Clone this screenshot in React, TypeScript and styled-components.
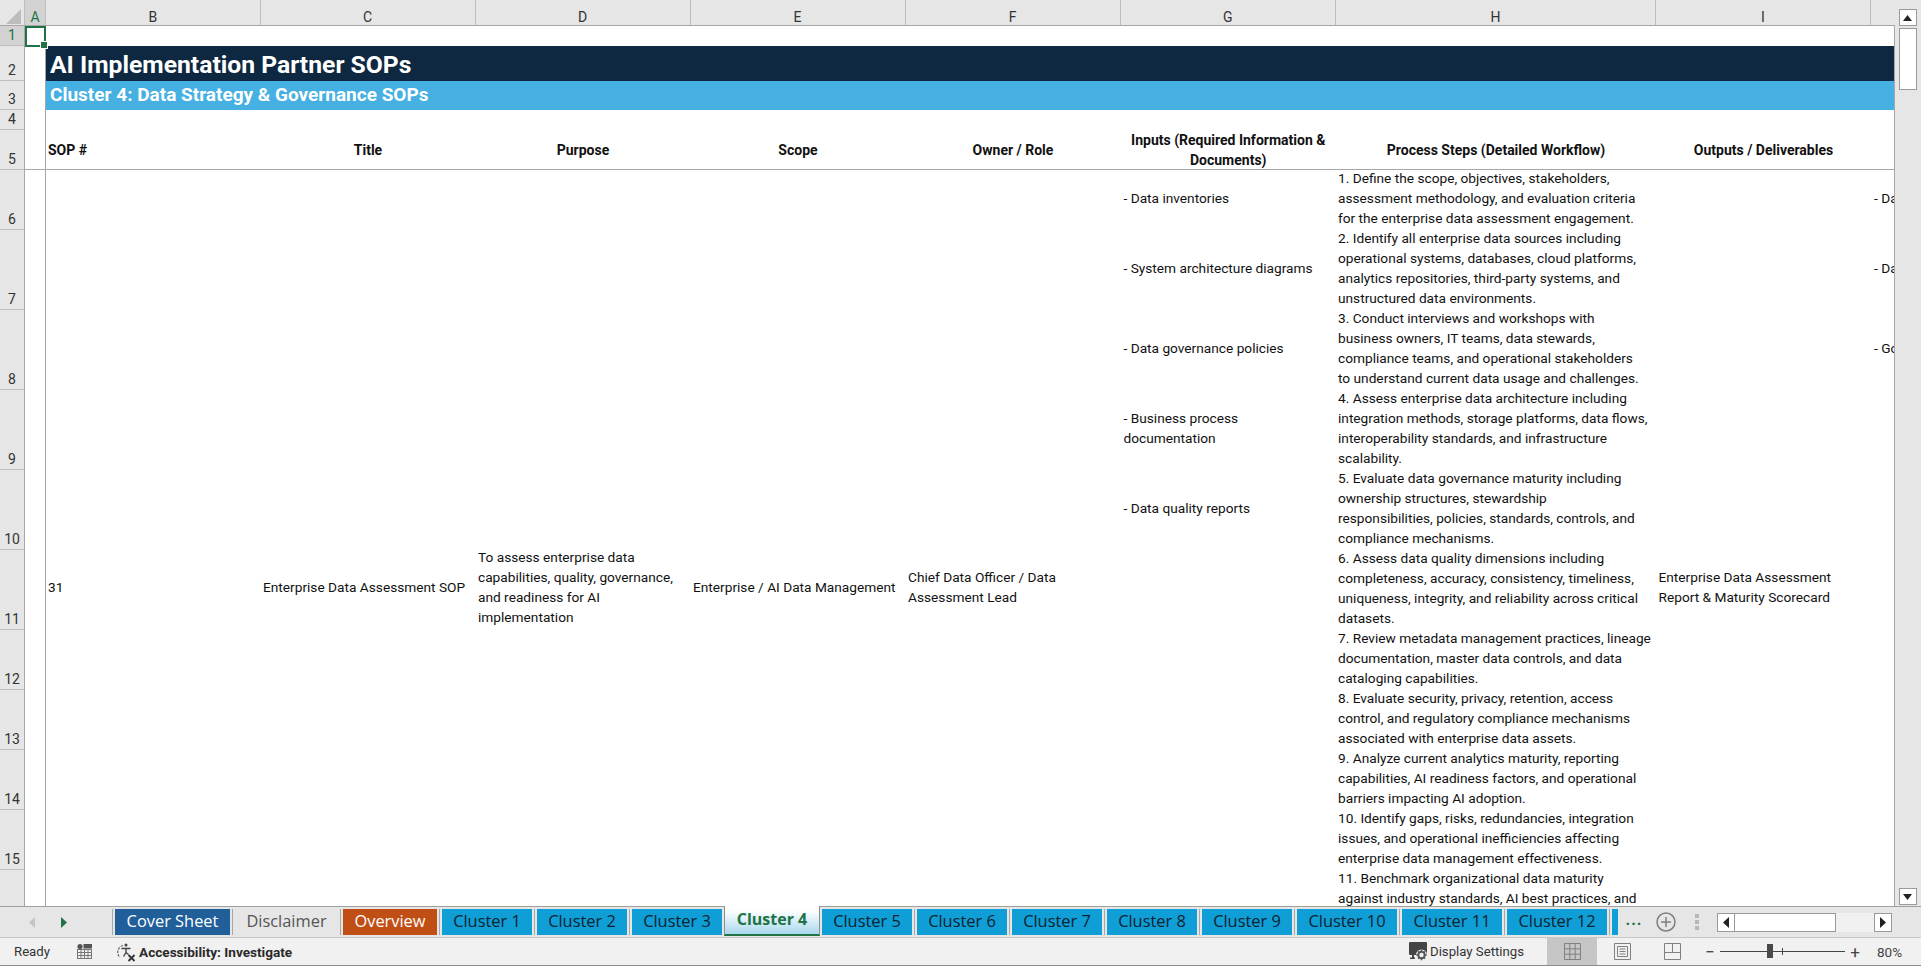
import React from 'react';
import styled, { createGlobalStyle } from 'styled-components';

const GREEN = '#217346';
const LINE = '#a6a6a6';
const FONT = `Roboto, 'Liberation Sans', sans-serif`;

const COLS = [
  { name: 'A', w: 21 },
  { name: 'B', w: 214.5 },
  { name: 'C', w: 215 },
  { name: 'D', w: 215 },
  { name: 'E', w: 215 },
  { name: 'F', w: 215 },
  { name: 'G', w: 215.5 },
  { name: 'H', w: 320 },
  { name: 'I', w: 215 },
  { name: '', w: 24 },
];

const ROWS = [20, 35, 29, 19.5, 40, 60, 80, 80, 80, 80, 80, 60, 60, 60, 60, 60, 80];
const VISIBLE_ROWS = 15;

const INPUTS = [
  ['- Data inventories'],
  ['- System architecture diagrams'],
  ['- Data governance policies'],
  ['- Business process', 'documentation'],
  ['- Data quality reports'],
];

const OUTPUT_STUBS = ['- Da', '- Da', '- Go'];

const STEPS = [
  ['1. Define the scope, objectives, stakeholders,', 'assessment methodology, and evaluation criteria', 'for the enterprise data assessment engagement.'],
  ['2. Identify all enterprise data sources including', 'operational systems, databases, cloud platforms,', 'analytics repositories, third-party systems, and', 'unstructured data environments.'],
  ['3. Conduct interviews and workshops with', 'business owners, IT teams, data stewards,', 'compliance teams, and operational stakeholders', 'to understand current data usage and challenges.'],
  ['4. Assess enterprise data architecture including', 'integration methods, storage platforms, data flows,', 'interoperability standards, and infrastructure', 'scalability.'],
  ['5. Evaluate data governance maturity including', 'ownership structures, stewardship', 'responsibilities, policies, standards, controls, and', 'compliance mechanisms.'],
  ['6. Assess data quality dimensions including', 'completeness, accuracy, consistency, timeliness,', 'uniqueness, integrity, and reliability across critical', 'datasets.'],
  ['7. Review metadata management practices, lineage', 'documentation, master data controls, and data', 'cataloging capabilities.'],
  ['8. Evaluate security, privacy, retention, access', 'control, and regulatory compliance mechanisms', 'associated with enterprise data assets.'],
  ['9. Analyze current analytics maturity, reporting', 'capabilities, AI readiness factors, and operational', 'barriers impacting AI adoption.'],
  ['10. Identify gaps, risks, redundancies, integration', 'issues, and operational inefficiencies affecting', 'enterprise data management effectiveness.'],
  ['11. Benchmark organizational data maturity', 'against industry standards, AI best practices, and'],
];

const TABS = [
  { label: 'Cover Sheet', bg: '#215f9a', fg: '#fff', w: 115 },
  { label: 'Disclaimer', bg: 'transparent', fg: '#555', w: 103 },
  { label: 'Overview', bg: '#c04f15', fg: '#fff', w: 94 },
  { label: 'Cluster 1', bg: '#0f9ed5', fg: '#0c2430', w: 90 },
  { label: 'Cluster 2', bg: '#0f9ed5', fg: '#0c2430', w: 90 },
  { label: 'Cluster 3', bg: '#0f9ed5', fg: '#0c2430', w: 90 },
  { label: 'Cluster 4', active: true, w: 90 },
  { label: 'Cluster 5', bg: '#0f9ed5', fg: '#0c2430', w: 90 },
  { label: 'Cluster 6', bg: '#0f9ed5', fg: '#0c2430', w: 90 },
  { label: 'Cluster 7', bg: '#0f9ed5', fg: '#0c2430', w: 90 },
  { label: 'Cluster 8', bg: '#0f9ed5', fg: '#0c2430', w: 90 },
  { label: 'Cluster 9', bg: '#0f9ed5', fg: '#0c2430', w: 90 },
  { label: 'Cluster 10', bg: '#0f9ed5', fg: '#0c2430', w: 100 },
  { label: 'Cluster 11', bg: '#0f9ed5', fg: '#0c2430', w: 100 },
  { label: 'Cluster 12', bg: '#0f9ed5', fg: '#0c2430', w: 100 },
  { label: '', bg: '#0f9ed5', fg: '#0c2430', w: 6 },
];

const GlobalStyle = createGlobalStyle`
  html, body { margin: 0; padding: 0; background: #e6e6e6; overflow: hidden; }
  * { box-sizing: border-box; }
`;

const Window = styled.div`
  width: 1921px;
  height: 966px;
  display: flex;
  flex-direction: column;
  overflow: hidden;
  font-family: ${FONT};
  color: #1a1a1a;
`;

const Workspace = styled.div`
  flex: 0 0 906px;
  display: flex;
  min-height: 0;
`;

const SheetPane = styled.div`
  flex: 0 0 1895px;
  display: flex;
  flex-direction: column;
  overflow: hidden;
`;

const ColumnHeader = styled.div`
  flex: 0 0 25px;
  display: flex;
  background: #e6e6e6;
  border-bottom: 1px solid ${LINE};
`;

const Corner = styled.div`
  flex: 0 0 25px;
  display: flex;
  align-items: flex-end;
  justify-content: flex-end;
  padding: 0 3px 1px 0;
  border-right: 1px solid #bdbdbd;
`;

const ColumnLabel = styled.div<{ $w: number; $selected?: boolean }>`
  flex: 0 0 ${(p) => p.$w}px;
  display: flex;
  align-items: center;
  justify-content: center;
  font-size: 14px;
  padding-top: 9px;
  color: ${(p) => (p.$selected ? GREEN : '#333')};
  background: ${(p) => (p.$selected ? '#d2d2d2' : 'transparent')};
  border-right: 1px solid #bdbdbd;
  &:last-child { border-right: none; }
`;

const SheetBody = styled.div`
  flex: 1;
  display: flex;
  min-height: 0;
  overflow: hidden;
  border-right: 1px solid ${LINE};
`;

const RowHeader = styled.div`
  flex: 0 0 25px;
  background: #e6e6e6;
  border-right: 1px solid ${LINE};
`;

const RowLabel = styled.div<{ $h: number; $selected?: boolean }>`
  height: ${(p) => p.$h}px;
  display: flex;
  align-items: flex-end;
  justify-content: center;
  padding-bottom: 1px;
  font-size: 14px;
  line-height: 18px;
  color: ${(p) => (p.$selected ? GREEN : '#333')};
  background: ${(p) => (p.$selected ? '#d2d2d2' : 'transparent')};
  border-bottom: 1px solid #bdbdbd;
`;

const Grid = styled.div`
  display: grid;
  flex: 1;
  background: #fff;
  grid-template-columns: ${COLS.map((c) => `${c.w}px`).join(' ')};
  grid-template-rows: ${ROWS.map((h) => `${h}px`).join(' ')};
  font-size: 13.7px;
  line-height: 20px;
  color: #111;
`;

const ActiveCell = styled.div`
  grid-column: 1;
  grid-row: 1;
  position: relative;
  border: 2px solid ${GREEN};
  height: 21px;
  z-index: 2;
  &::after {
    content: '';
    position: absolute;
    right: -4px;
    bottom: -4px;
    width: 6px;
    height: 6px;
    background: ${GREEN};
    border: 1px solid #fff;
  }
`;

const FrozenGutter = styled.div`
  grid-column: 1;
  grid-row: 2 / span 4;
  border-right: 1px solid ${LINE};
  border-bottom: 1px solid ${LINE};
`;

const Gutter = styled.div`
  grid-column: 1;
  grid-row: 6 / span 12;
  border-right: 1px solid ${LINE};
`;

const Banner = styled.div<{ $row: number; $bg: string; $size: number; $top: number; $bottom: number }>`
  grid-column: 2 / -1;
  grid-row: ${(p) => p.$row};
  display: flex;
  align-items: center;
  padding: ${(p) => p.$top}px 0 ${(p) => p.$bottom}px 4px;
  background: ${(p) => p.$bg};
  color: #fff;
  font-weight: 700;
  font-size: ${(p) => p.$size}px;
  white-space: nowrap;
`;

const HeadCell = styled.div<{ $col: number; $left?: boolean }>`
  grid-column: ${(p) => p.$col};
  grid-row: 5;
  display: flex;
  align-items: center;
  justify-content: ${(p) => (p.$left ? 'flex-start' : 'center')};
  text-align: ${(p) => (p.$left ? 'left' : 'center')};
  padding: 1px 2px 0;
  font-weight: 700;
  font-size: 14px;
  border-bottom: 1px solid ${LINE};
`;

const MergedCell = styled.div<{ $col: number; $pad?: number }>`
  grid-column: ${(p) => p.$col};
  grid-row: 6 / span 12;
  display: flex;
  flex-direction: column;
  justify-content: center;
  padding-left: ${(p) => p.$pad ?? 2.5}px;
  padding-bottom: 5px;
  white-space: nowrap;
`;

const InputCell = styled.div<{ $row: number; $col: number }>`
  grid-column: ${(p) => p.$col};
  grid-row: ${(p) => p.$row};
  display: flex;
  flex-direction: column;
  justify-content: center;
  padding-left: 3px;
  padding-bottom: 3px;
  white-space: nowrap;
  overflow: hidden;
`;

const StepCell = styled.div<{ $row: number }>`
  grid-column: 8;
  grid-row: ${(p) => p.$row};
  margin-top: -1.5px;
  padding-left: 2px;
  white-space: nowrap;
`;

const VScroll = styled.div`
  flex: 1;
  display: flex;
  flex-direction: column;
  align-items: center;
  padding: 9px 4px 1px 3px;
  background: #e6e6e6;
`;

const ScrollButton = styled.div`
  width: 18px;
  height: 17px;
  flex: none;
  display: flex;
  align-items: center;
  justify-content: center;
  background: #fff;
  border: 1px solid #9a9a9a;
`;

const VThumb = styled.div`
  width: 18px;
  height: 62px;
  flex: none;
  margin-top: 2px;
  background: #fff;
  border: 1px solid #9a9a9a;
`;

const VTrack = styled.div`
  flex: 1;
`;

const TabStrip = styled.div`
  flex: 0 0 32px;
  display: flex;
  align-items: stretch;
  background: #e6e6e6;
  border-top: 1px solid #9f9f9f;
  border-bottom: 1px solid #c8c8c8;
`;

const NavArrows = styled.div`
  flex: 0 0 110px;
  display: flex;
  align-items: center;
  gap: 24px;
  padding-left: 28px;
`;

const Tabs = styled.div`
  flex: 0 0 1507px;
  display: flex;
  align-items: flex-start;
`;

const Separator = styled.div`
  flex: 0 0 5px;
  height: 26px;
  margin-top: 2px;
  display: flex;
  justify-content: center;
  &::before {
    content: '';
    width: 1px;
    background: #a8a8a8;
  }
`;

const Tab = styled.div<{ $w: number; $bg?: string; $fg?: string }>`
  flex: 0 0 ${(p) => p.$w}px;
  height: 26px;
  margin-top: 2px;
  padding-bottom: 4px;
  display: flex;
  align-items: center;
  justify-content: center;
  font-family: 'Open Sans', sans-serif;
  font-size: 16.4px;
  background: ${(p) => p.$bg};
  color: ${(p) => p.$fg};
`;

const ActiveTab = styled.div<{ $w: number }>`
  flex: 0 0 ${(p) => p.$w + 6}px;
  margin: -1px -3px 0;
  height: 30px;
  padding-bottom: 2px;
  display: flex;
  align-items: center;
  justify-content: center;
  font-family: 'Open Sans', sans-serif;
  font-size: 16px;
  font-weight: 700;
  color: ${GREEN};
  background: linear-gradient(#ffffff 15%, #a9d9ee);
  border-left: 1px solid #8f8f8f;
  border-right: 1px solid #8f8f8f;
  border-bottom: 2px solid ${GREEN};
  position: relative;
  z-index: 1;
`;

const TabTools = styled.div`
  flex: 1;
  display: flex;
  align-items: center;
`;

const More = styled.div`
  width: 32px;
  text-align: center;
  font-size: 16px;
  font-weight: 700;
  letter-spacing: 1px;
  color: ${GREEN};
  padding-bottom: 6px;
`;

const AddSheet = styled.div`
  width: 20px;
  height: 20px;
  margin-left: 6px;
  color: #7f7f7f;
  display: flex;
`;

const Splitter = styled.div`
  margin-left: 19px;
  width: 4px;
  height: 16px;
  background: repeating-linear-gradient(#b8b8b8 0 4px, transparent 4px 6px);
`;

const HScroll = styled.div`
  margin-left: 18px;
  width: 175px;
  height: 19px;
  display: flex;
  background: #f0f0f0;
`;

const HButton = styled.div`
  flex: 0 0 18px;
  display: flex;
  align-items: center;
  justify-content: center;
  background: #fff;
  border: 1px solid #9a9a9a;
`;

const HThumb = styled.div`
  flex: 0 0 101px;
  background: #fff;
  border: 1px solid #9a9a9a;
  border-left: none;
`;

const HTrack = styled.div`
  flex: 1;
`;

const StatusBar = styled.div`
  flex: 0 0 28px;
  display: flex;
  align-items: stretch;
  background: #f1f1f1;
  border-bottom: 1px solid #8c8c8c;
  font-size: 13.2px;
  color: #333;
`;

const StatusLeft = styled.div`
  flex: 1;
  display: flex;
  align-items: center;
`;

const Ready = styled.span`
  margin-left: 14px;
  width: 63px;
`;

const Accessibility = styled.div`
  margin-left: 24px;
  display: flex;
  align-items: center;
  gap: 3px;
  font-size: 13.6px;
  font-weight: 700;
  color: #2a2a2a;
`;

const DisplaySettings = styled.div`
  flex: 0 0 138px;
  display: flex;
  align-items: center;
  gap: 2px;
`;

const ViewButton = styled.div<{ $on?: boolean }>`
  flex: 0 0 50px;
  display: flex;
  align-items: center;
  justify-content: center;
  background: ${(p) => (p.$on ? '#c6c6c6' : 'transparent')};
`;

const ZoomArea = styled.div`
  flex: 0 0 224px;
  display: flex;
  align-items: center;
  padding-left: 5px;
`;

const ZoomGlyph = styled.span`
  width: 16px;
  text-align: center;
  font-size: 17px;
  color: #444;
`;

const Slider = styled.div`
  position: relative;
  width: 125px;
  height: 1px;
  margin: 0 2px;
  background: #444;
`;

const SliderThumb = styled.div`
  position: absolute;
  left: 47px;
  top: -7px;
  width: 6px;
  height: 14px;
  background: #4a4a4a;
`;

const SliderTick = styled.div`
  position: absolute;
  left: 62px;
  top: -3px;
  width: 1px;
  height: 7px;
  background: #444;
`;

const ZoomValue = styled.span`
  margin-left: 14px;
  color: #444;
  font-size: 13.5px;
`;

const Triangle = ({ dir, color = '#222' }: { dir: 'up' | 'down' | 'left' | 'right'; color?: string }) => {
  const points = {
    up: '0,7 9,7 4.5,1',
    down: '0,1 9,1 4.5,7',
    left: '7,0 7,11 1,5.5',
    right: '1,0 1,11 7,5.5',
  }[dir];
  const vertical = dir === 'up' || dir === 'down';
  return (
    <svg width={vertical ? 9 : 8} height={vertical ? 8 : 11}>
      <polygon points={points} fill={color} />
    </svg>
  );
};

const CornerIcon = () => (
  <svg width="15" height="15">
    <polygon points="15,0 15,15 0,15" fill="#bdbdbd" />
  </svg>
);

const MacroIcon = () => (
  <svg width="15" height="15" viewBox="0 0 15 15" fill="none">
    <circle cx="3" cy="2.6" r="2.6" fill="#555" />
    <rect x="6.5" y="0" width="8.5" height="4.5" fill="#555" />
    <rect x="0.5" y="5.5" width="14" height="9" fill="#f1f1f1" stroke="#777" />
    <path d="M0.5 8.5h14M0.5 11.5h14M4 5.5v9M7.5 5.5v9M11 5.5v9" stroke="#777" />
  </svg>
);

const AccessibilityIcon = () => (
  <svg width="20" height="20" viewBox="0 0 20 20" fill="none">
    <path d="M7 3.5A7 7 0 0 0 4 15.5" stroke="#666" strokeWidth="1.2" strokeDasharray="2.5 1.2" />
    <circle cx="10" cy="3" r="1.5" fill="#444" />
    <path d="M5.5 6.5h9M10 6.5v4l-2.5 4M10 10.5l2.5 2" stroke="#444" strokeWidth="1.4" />
    <path d="M12.5 13l6 6M18.5 13l-6 6" stroke="#333" strokeWidth="1.8" />
  </svg>
);

const DisplayIcon = () => (
  <svg width="19" height="19" viewBox="0 0 19 19" fill="none">
    <rect x="0" y="0" width="18" height="13" rx="1" fill="#444" />
    <rect x="1" y="15.5" width="5" height="1.5" fill="#444" />
    <rect x="3" y="13" width="2" height="3" fill="#444" />
    <circle cx="12.5" cy="13" r="5.5" fill="#f1f1f1" />
    <circle cx="12.5" cy="13" r="3.2" fill="none" stroke="#555" strokeWidth="2" />
    <path d="M12.5 7.8v2M12.5 16.2v2M7.3 13h2M15.7 13h2M8.9 9.4l1.4 1.4M14.7 15.2l1.4 1.4M16.1 9.4l-1.4 1.4M10.3 15.2l-1.4 1.4" stroke="#555" strokeWidth="1.5" />
  </svg>
);

const NormalIcon = () => (
  <svg width="17" height="17" fill="none" stroke="#808080">
    <path d="M.5.5h16v16H.5zM.5 5.8h16M.5 11.2h16M5.8.5v16M11.2.5v16" />
  </svg>
);

const LayoutIcon = () => (
  <svg width="17" height="17" fill="none" stroke="#808080">
    <path d="M.5.5h16v16H.5zM3.5 3.5h10v10h-10zM5.5 6h6M5.5 8.5h6M5.5 11h6" />
  </svg>
);

const BreakIcon = () => (
  <svg width="17" height="17" fill="none" stroke="#808080">
    <path d="M.5.5h16v16H.5zM.5 9.5h16M8.5.5v9" />
  </svg>
);

const PlusIcon = () => (
  <svg width="20" height="20" fill="none" stroke="currentColor">
    <circle cx="10" cy="10" r="9" strokeWidth="1.5" />
    <path d="M10 5v10M5 10h10" strokeWidth="1.5" />
  </svg>
);

const bodyRow = (i: number) => i + 6;

export default function App() {
  return (
    <Window>
      <GlobalStyle />
      <Workspace>
        <SheetPane>
          <ColumnHeader>
            <Corner>
              <CornerIcon />
            </Corner>
            {COLS.map((c) => (
              <ColumnLabel key={c.name} $w={c.w} $selected={c.name === 'A'}>
                {c.name}
              </ColumnLabel>
            ))}
          </ColumnHeader>
          <SheetBody>
            <RowHeader>
              {ROWS.slice(0, VISIBLE_ROWS).map((h, i) => (
                <RowLabel key={i} $h={h} $selected={i === 0}>
                  {i + 1}
                </RowLabel>
              ))}
            </RowHeader>
            <Grid>
              <ActiveCell />
              <FrozenGutter />
              <Gutter />
              <Banner $row={2} $bg="#0e2841" $size={24.7} $top={3} $bottom={0}>
                AI Implementation Partner SOPs
              </Banner>
              <Banner $row={3} $bg="#45b0e1" $size={19} $top={0} $bottom={2}>
                Cluster 4: Data Strategy &amp; Governance SOPs
              </Banner>
              <HeadCell $col={2} $left>SOP #</HeadCell>
              <HeadCell $col={3}>Title</HeadCell>
              <HeadCell $col={4}>Purpose</HeadCell>
              <HeadCell $col={5}>Scope</HeadCell>
              <HeadCell $col={6}>Owner / Role</HeadCell>
              <HeadCell $col={7}>Inputs (Required Information &amp; Documents)</HeadCell>
              <HeadCell $col={8}>Process Steps (Detailed Workflow)</HeadCell>
              <HeadCell $col={9}>Outputs / Deliverables</HeadCell>
              <HeadCell $col={10} />

              <MergedCell $col={2} $pad={2}>31</MergedCell>
              <MergedCell $col={3}>Enterprise Data Assessment SOP</MergedCell>
              <MergedCell $col={4}>
                <span>To assess enterprise data</span>
                <span>capabilities, quality, governance,</span>
                <span>and readiness for AI</span>
                <span>implementation</span>
              </MergedCell>
              <MergedCell $col={5}>Enterprise / AI Data Management</MergedCell>
              <MergedCell $col={6}>
                <span>Chief Data Officer / Data</span>
                <span>Assessment Lead</span>
              </MergedCell>
              <MergedCell $col={9}>
                <span>Enterprise Data Assessment</span>
                <span>Report &amp; Maturity Scorecard</span>
              </MergedCell>

              {INPUTS.map((lines, i) => (
                <InputCell key={i} $col={7} $row={bodyRow(i)}>
                  {lines.map((l) => (
                    <span key={l}>{l}</span>
                  ))}
                </InputCell>
              ))}
              {OUTPUT_STUBS.map((l, i) => (
                <InputCell key={i} $col={10} $row={bodyRow(i)}>
                  {l}
                </InputCell>
              ))}
              {STEPS.map((lines, i) => (
                <StepCell key={i} $row={bodyRow(i)}>
                  {lines.map((l) => (
                    <div key={l}>{l}</div>
                  ))}
                </StepCell>
              ))}
            </Grid>
          </SheetBody>
        </SheetPane>
        <VScroll>
          <ScrollButton>
            <Triangle dir="up" />
          </ScrollButton>
          <VThumb />
          <VTrack />
          <ScrollButton>
            <Triangle dir="down" />
          </ScrollButton>
        </VScroll>
      </Workspace>

      <TabStrip>
        <NavArrows>
          <Triangle dir="left" color="#c4c4c4" />
          <Triangle dir="right" color={GREEN} />
        </NavArrows>
        <Tabs>
          <Separator />
          {TABS.map((t, i) => (
            <React.Fragment key={i}>
              {t.active ? (
                <ActiveTab $w={t.w}>{t.label}</ActiveTab>
              ) : (
                <Tab $w={t.w} $bg={t.bg} $fg={t.fg}>
                  {t.label}
                </Tab>
              )}
              {i < TABS.length - 1 && <Separator />}
            </React.Fragment>
          ))}
        </Tabs>
        <TabTools>
          <More>...</More>
          <AddSheet>
            <PlusIcon />
          </AddSheet>
          <Splitter />
          <HScroll>
            <HButton>
              <Triangle dir="left" />
            </HButton>
            <HThumb />
            <HTrack />
            <HButton>
              <Triangle dir="right" />
            </HButton>
          </HScroll>
        </TabTools>
      </TabStrip>

      <StatusBar>
        <StatusLeft>
          <Ready>Ready</Ready>
          <MacroIcon />
          <Accessibility>
            <AccessibilityIcon />
            Accessibility: Investigate
          </Accessibility>
        </StatusLeft>
        <DisplaySettings>
          <DisplayIcon />
          Display Settings
        </DisplaySettings>
        <ViewButton $on>
          <NormalIcon />
        </ViewButton>
        <ViewButton>
          <LayoutIcon />
        </ViewButton>
        <ViewButton>
          <BreakIcon />
        </ViewButton>
        <ZoomArea>
          <ZoomGlyph>−</ZoomGlyph>
          <Slider>
            <SliderThumb />
            <SliderTick />
          </Slider>
          <ZoomGlyph>+</ZoomGlyph>
          <ZoomValue>80%</ZoomValue>
        </ZoomArea>
      </StatusBar>
    </Window>
  );
}
